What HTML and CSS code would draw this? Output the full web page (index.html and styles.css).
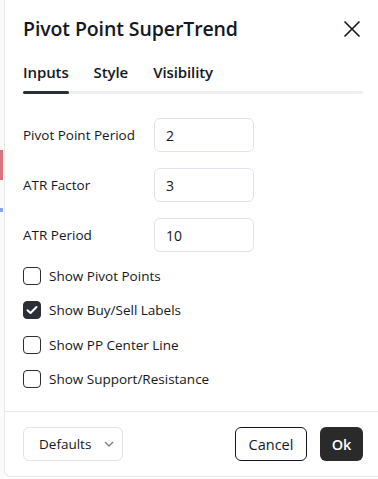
FILE: index.html
```html
<!DOCTYPE html>
<html lang="en">
<head>
    <meta charset="UTF-8">
    <title>Pivot Point SuperTrend</title>
    <link rel="stylesheet" href="styles.css">
</head>
<body>
    <div class="backdrop">
        <div class="chart-mark red"></div>
        <div class="chart-mark blue"></div>
    </div>
    <div class="dialog">
        <div class="header">
            <div class="title">Pivot Point SuperTrend</div>
            <button class="close" type="button">
                <svg width="18" height="18" viewBox="0 0 18 18"><path d="M1.5 1.5l15 15M16.5 1.5l-15 15" stroke="#131722" stroke-width="1.6" fill="none"/></svg>
            </button>
        </div>
        <div class="tabs">
            <div class="tab active">Inputs</div>
            <div class="tab">Style</div>
            <div class="tab">Visibility</div>
        </div>
        <div class="tab-track"><div class="tab-bar"></div></div>

        <div class="content">
            <div class="field">
                <label for="pp">Pivot Point Period</label>
                <input id="pp" class="num" type="text" value="2">
            </div>
            <div class="field">
                <label for="atrf">ATR Factor</label>
                <input id="atrf" class="num" type="text" value="3">
            </div>
            <div class="field">
                <label for="atrp">ATR Period</label>
                <input id="atrp" class="num" type="text" value="10">
            </div>

            <div class="checks">
                <label class="check"><span class="box"></span>Show Pivot Points</label>
                <label class="check"><span class="box on">
                    <svg width="12" height="10" viewBox="0 0 12 10"><path d="M1.5 5.2l3 2.8 6-6" stroke="#fff" stroke-width="2" fill="none" stroke-linecap="round" stroke-linejoin="round"/></svg>
                </span>Show Buy/Sell Labels</label>
                <label class="check"><span class="box"></span>Show PP Center Line</label>
                <label class="check"><span class="box"></span>Show Support/Resistance</label>
            </div>
        </div>

        <div class="footer">
            <button class="btn defaults" type="button">Defaults
                <svg width="10" height="6" viewBox="0 0 10 6"><path d="M1 1l4 4 4-4" stroke="#787b86" stroke-width="1.3" fill="none"/></svg>
            </button>
            <div class="actions">
                <button class="btn cancel" type="button">Cancel</button>
                <button class="btn ok" type="button">Ok</button>
            </div>
        </div>
    </div>
</body>
</html>
```

FILE: styles.css
```css
html, body {
    margin: 0;
    height: 100%;
}
body {
    font-family: "Open Sans", "Noto Sans", sans-serif;
    color: #131722;
    background: #fff;
    overflow: hidden;
    display: flex;
}
.backdrop {
    width: 4px;
    flex: none;
    position: relative;
    background: #fafafa;
}
.chart-mark {
    position: absolute;
    left: 0;
    width: 3px;
}
.chart-mark.red {
    top: 150px;
    height: 30px;
    background: #d87480;
}
.chart-mark.blue {
    top: 208px;
    height: 4px;
    background: #8aa4e6;
}
.dialog {
    flex: 1;
    background: #fff;
    border-left: 1px solid #e8e8e8;
    border-bottom: 1px solid #e8e8e8;
    border-radius: 0 0 0 6px;
    height: 476px;
    display: flex;
    flex-direction: column;
}
.header {
    display: flex;
    align-items: center;
    justify-content: space-between;
    padding: 13px 18px 0 18px;
    height: 30px;
}
.title {
    font-size: 19.5px;
    font-weight: 600;
    letter-spacing: -0.1px;
}
.close {
    border: none;
    background: none;
    padding: 0;
    width: 18px;
    height: 18px;
    margin-right: -1px;
    margin-top: 1px;
}
.tabs {
    display: flex;
    gap: 25px;
    padding: 19px 18px 0 18px;
    height: 22px;
}
.tab {
    font-size: 15px;
    font-weight: 600;
    letter-spacing: -0.1px;
}
.tab-track {
    margin: 7px 15px 0 18px;
    height: 3px;
    border-radius: 2px;
    background: #eeeff2;
}
.tab-bar {
    width: 46px;
    height: 3px;
    border-radius: 2px;
    background: #2a2e39;
}
.content {
    flex: 1;
    padding: 24px 18px 0 18px;
}
.field {
    display: flex;
    align-items: center;
    height: 34px;
    margin-bottom: 16px;
}
.field label {
    width: 131px;
    font-size: 13.5px;
}
.num {
    box-sizing: border-box;
    width: 100px;
    height: 34px;
    border: 1px solid #e0e3eb;
    border-radius: 6px;
    padding: 0 11px;
    font-family: inherit;
    font-size: 14px;
    color: #131722;
}
.checks {
    display: flex;
    flex-direction: column;
    margin-top: -9px;
}
.check {
    display: flex;
    align-items: center;
    gap: 8px;
    height: 34.3px;
    font-size: 13.5px;
}
.box {
    box-sizing: border-box;
    width: 18px;
    height: 18px;
    border: 1px solid #2a2e39;
    border-radius: 4px;
    display: flex;
    align-items: center;
    justify-content: center;
}
.box.on {
    background: #2a2e39;
}
.footer {
    border-top: 1px solid #e8e8e8;
    display: flex;
    align-items: center;
    justify-content: space-between;
    padding: 0 15px 0 18px;
    height: 64px;
}
.actions {
    display: flex;
    gap: 13px;
}
.btn {
    box-sizing: border-box;
    height: 34px;
    border-radius: 6px;
    font-family: inherit;
    font-size: 14.5px;
    color: #131722;
    background: #fff;
}
.defaults {
    width: 100px;
    border: 1px solid #e0e3eb;
    display: flex;
    align-items: center;
    gap: 13px;
    padding: 0 0 0 15px;
    font-size: 13.5px;
}
.cancel {
    width: 72px;
    border: 1px solid #131722;
}
.ok {
    width: 43px;
    border: none;
    background: #2a2a2a;
    color: #fff;
    font-weight: 600;
}
```
